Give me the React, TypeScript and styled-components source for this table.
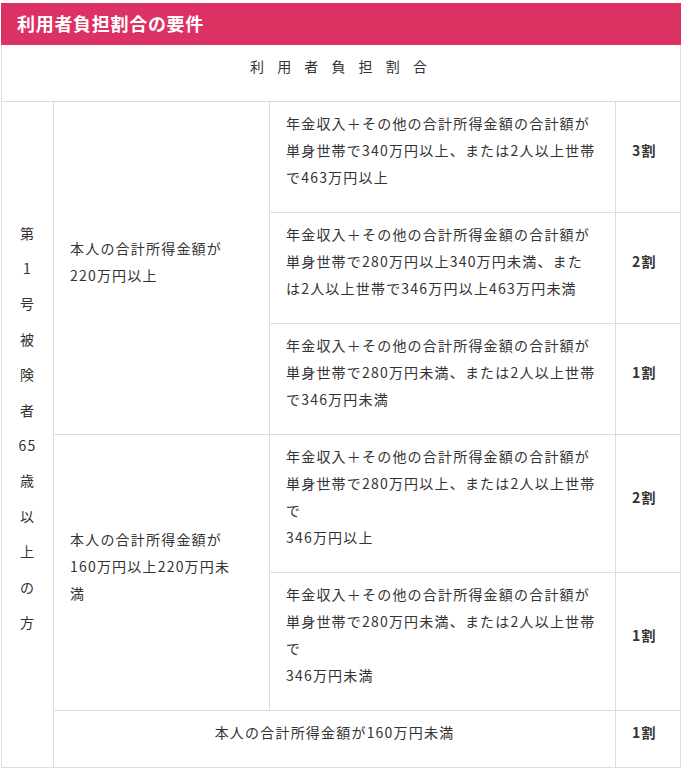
import React from "react";
import styled, { createGlobalStyle } from "styled-components";

const Global = createGlobalStyle`
  html, body { margin: 0; padding: 0; background: #fff; }
  body { font-family: "Noto Sans CJK JP", "Noto Sans", sans-serif; color: #333; }
`;

const Page = styled.div`
  width: 682px;
  box-sizing: border-box;
  padding: 3px 1px 0 1px;
`;

const Heading = styled.h2`
  margin: 0;
  height: 42px;
  box-sizing: border-box;
  background: #dc3163;
  color: #fff;
  font-size: 18px;
  font-weight: 700;
  letter-spacing: 0.7px;
  line-height: 41px;
  padding-left: 16px;
`;

const Table = styled.table`
  width: 680px;
  table-layout: fixed;
  border-collapse: collapse;
  font-size: 14px;
  letter-spacing: 1.2px;
  line-height: 27px;
  color: #333;
`;

const Cell = styled.td<{ $align?: "left" | "center"; $bold?: boolean; $noTop?: boolean }>`
  border: 1px solid #ddd;
  ${(p) => (p.$noTop ? "border-top: none;" : "")}
  padding: 8px 16px 21px 16px;
  vertical-align: middle;
  text-align: ${(p) => p.$align ?? "left"};
  font-weight: ${(p) => (p.$bold ? 700 : 400)};
  white-space: nowrap;
`;

const TitleCell = styled(Cell)`
  letter-spacing: 5px;
`;

const SideCell = styled(Cell)`
  padding-left: 4px;
  padding-right: 4px;
  line-height: 35.4px;
`;

const RateCell = styled(Cell)`
  padding-left: 16px;
  padding-right: 4px;
`;

const Lines: React.FC<{ lines: string[] }> = ({ lines }) => (
  <>
    {lines.map((l, i) => (
      <React.Fragment key={i}>
        {i > 0 && <br />}
        {l}
      </React.Fragment>
    ))}
  </>
);

const side = ["第", "1", "号", "被", "険", "者", "65", "歳", "以", "上", "の", "方"];

const rows: { cond: string[]; rate: string }[] = [
  {
    cond: ["年金収入＋その他の合計所得金額の合計額が", "単身世帯で340万円以上、または2人以上世帯", "で463万円以上"],
    rate: "3割",
  },
  {
    cond: ["年金収入＋その他の合計所得金額の合計額が", "単身世帯で280万円以上340万円未満、また", "は2人以上世帯で346万円以上463万円未満"],
    rate: "2割",
  },
  {
    cond: ["年金収入＋その他の合計所得金額の合計額が", "単身世帯で280万円未満、または2人以上世帯", "で346万円未満"],
    rate: "1割",
  },
  {
    cond: ["年金収入＋その他の合計所得金額の合計額が", "単身世帯で280万円以上、または2人以上世帯", "で", "346万円以上"],
    rate: "2割",
  },
  {
    cond: ["年金収入＋その他の合計所得金額の合計額が", "単身世帯で280万円未満、または2人以上世帯", "で", "346万円未満"],
    rate: "1割",
  },
];

export default function App() {
  return (
    <Page>
      <Global />
      <Heading>利用者負担割合の要件</Heading>
      <Table>
        <colgroup>
          <col style={{ width: 52 }} />
          <col style={{ width: 216 }} />
          <col style={{ width: 346 }} />
          <col />
        </colgroup>
        <tbody>
          <tr>
            <TitleCell colSpan={4} $align="center" $noTop>
              利 用 者 負 担 割 合
            </TitleCell>
          </tr>
          {rows.map((r, i) => (
            <tr key={i}>
              {i === 0 && (
                <SideCell rowSpan={6} $align="center">
                  <Lines lines={side} />
                </SideCell>
              )}
              {i === 0 && (
                <Cell rowSpan={3}>
                  <Lines lines={["本人の合計所得金額が", "220万円以上"]} />
                </Cell>
              )}
              {i === 3 && (
                <Cell rowSpan={2}>
                  <Lines lines={["本人の合計所得金額が", "160万円以上220万円未", "満"]} />
                </Cell>
              )}
              <Cell>
                <Lines lines={r.cond} />
              </Cell>
              <RateCell $bold>{r.rate}</RateCell>
            </tr>
          ))}
          <tr>
            <Cell colSpan={2} $align="center">
              本人の合計所得金額が160万円未満
            </Cell>
            <RateCell $bold>1割</RateCell>
          </tr>
        </tbody>
      </Table>
    </Page>
  );
}
